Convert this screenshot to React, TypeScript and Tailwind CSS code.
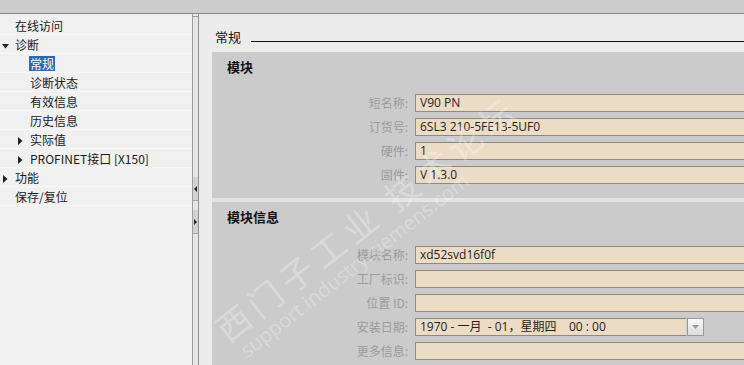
import React from "react";

const cjk = { fontFamily: '"Noto Sans CJK SC", "Noto Sans", sans-serif' };

type TreeItem = { label: string; level: number; arrow?: "down" | "right"; selected?: boolean };

const tree: TreeItem[] = [
  { label: "在线访问", level: 0 },
  { label: "诊断", level: 0, arrow: "down" },
  { label: "常规", level: 1, selected: true },
  { label: "诊断状态", level: 1 },
  { label: "有效信息", level: 1 },
  { label: "历史信息", level: 1 },
  { label: "实际值", level: 1, arrow: "right" },
  { label: "PROFINET接口 [X150]", level: 1, arrow: "right" },
  { label: "功能", level: 0, arrow: "right" },
  { label: "保存/复位", level: 0 },
];

function Arrow({ dir }: { dir: "down" | "right" }) {
  return dir === "down" ? (
    <svg width="7" height="5" viewBox="0 0 7 5" className="absolute left-[-12px] top-[7px]">
      <polygon points="0,0 7,0 3.5,4.5" fill="#222" />
    </svg>
  ) : (
    <svg width="5" height="8" viewBox="0 0 5 8" className="absolute left-[-11px] top-[5px]">
      <polygon points="0,0 4.5,4 0,8" fill="#222" />
    </svg>
  );
}

function Field({ label, value, date }: { label: string; value?: string; date?: boolean }) {
  return (
    <div className="flex items-center h-[18px]">
      <div className="w-[197px] text-right text-[12px] text-[#9b9b9b] leading-none pr-[1px]">{label}</div>
      <div className="ml-[6px] flex-1 flex items-center">
        <div
          className={`h-[18px] bg-[#ecdcc5] border border-[#8d8a85] border-r-0 flex items-center pl-[4px] text-[12px] text-[#1e1e1e] whitespace-pre ${
            date ? "w-[271px] border-r border-r-[#8d8a85]" : "flex-1"
          }`}
          style={{ fontFamily: '"Open Sans", "Noto Sans CJK SC", sans-serif' }}
        >
          {value}
        </div>
        {date && (
          <div className="ml-[1px] w-[17px] h-[18px] border border-[#9a9a9a] bg-gradient-to-b from-[#fafafa] to-[#dcdcdc] flex items-center justify-center">
            <svg width="7" height="4" viewBox="0 0 7 4">
              <polygon points="0,0 7,0 3.5,4" fill="#9a9a9a" />
            </svg>
          </div>
        )}
      </div>
    </div>
  );
}

export default function App() {
  return (
    <div className="relative w-[744px] h-[365px] overflow-hidden bg-[#ececec] flex flex-col" style={cjk}>
      {/* top bar */}
      <div className="h-[14px] bg-[#cdcdcd] border-b border-[#8a8a8a] shrink-0" />

      <div className="flex flex-1 min-h-0">
        {/* tree */}
        <div className="w-[193px] bg-[#f0f0f0] pt-[2px] border-r border-[#9c9c9c] shrink-0">
          {tree.map((t, i) => (
            <div key={i} className="h-[19px] border-b border-[#f8f8f8] flex items-center">
              <div
                className={`relative flex items-center ${t.level === 0 ? "ml-[14px]" : "ml-[29px]"}`}
              >
                {t.arrow && <Arrow dir={t.arrow} />}
                <span
                  className={`text-[12px] leading-[15px] px-[1px] ${
                    t.selected ? "bg-[#3464b4] text-white" : "text-[#1a1a1a]"
                  }`}
                >
                  {t.label}
                </span>
              </div>
            </div>
          ))}
        </div>

        {/* splitter */}
        <div className="w-[6px] shrink-0 pt-[2px] border-r border-[#8f8f8f]">
          <div className="h-full bg-[#e6e6e6] border-t border-[#9a9a9a] flex flex-col">
            <div className="mt-[160px] h-[24px] bg-[#d2d2d2] border-b border-[#a8a8a8] flex items-center justify-center">
              <svg width="3" height="6" viewBox="0 0 3 6">
                <polygon points="3,0 0,3 3,6" fill="#222" />
              </svg>
            </div>
            <div className="mt-[9px] h-[24px] bg-[#d2d2d2] border-b border-[#a8a8a8] flex items-center justify-center">
              <svg width="3" height="6" viewBox="0 0 3 6">
                <polygon points="0,0 3,3 0,6" fill="#222" />
              </svg>
            </div>
          </div>
        </div>

        {/* right content */}
        <div className="flex-1 pl-[13px] min-w-0">
          <div className="h-[38px] flex items-end pb-[9px]">
            <span className="text-[13px] leading-none text-[#111] ml-[3px]">常规</span>
            <div className="flex-1 h-px bg-[#111] ml-[10px] mb-[1px]" />
          </div>

          <div className="bg-[#cbcbcb] pt-[6px] pb-[14px]">
            <div className="pl-[15px] h-[18px] flex items-center text-[13px] font-bold text-[#111]">模块</div>
            <div className="mt-[18px] flex flex-col gap-[6px]">
              <Field label="短名称:" value="V90 PN" />
              <Field label="订货号:" value="6SL3 210-5FE13-5UF0" />
              <Field label="硬件:" value="1" />
              <Field label="固件:" value="V 1.3.0" />
            </div>
          </div>

          <div className="h-[4px] bg-[#e4e4e4]" />

          <div className="bg-[#cbcbcb] pt-[6px] pb-[14px] h-full">
            <div className="pl-[15px] h-[18px] flex items-center text-[13px] font-bold text-[#111]">模块信息</div>
            <div className="mt-[20px] flex flex-col gap-[6px]">
              <Field label="模块名称:" value="xd52svd16f0f" />
              <Field label="工厂标识:" />
              <Field label="位置 ID:" />
              <Field label="安装日期:" value="1970 - 一月  - 01，星期四    00 : 00" date />
              <Field label="更多信息:" />
            </div>
          </div>
        </div>
      </div>

      {/* watermark */}
      <div
        className="absolute left-[208px] top-[318px] origin-top-left -rotate-[38deg] pointer-events-none text-white/30 whitespace-nowrap"
      >
        <div className="text-[34px] leading-[38px] tracking-[6px]">西门子工业 技术论坛</div>
        <div
          className="text-[20px] leading-[22px] ml-[6px]"
          style={{ fontFamily: '"Open Sans", sans-serif' }}
        >
          support.industry.siemens.com
        </div>
      </div>
    </div>
  );
}
